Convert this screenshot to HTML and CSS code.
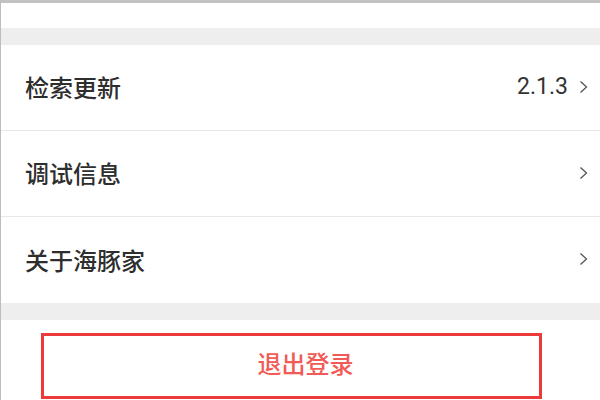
FILE: index.html
```html
<!DOCTYPE html>
<html lang="zh-CN">
<head>
<meta charset="utf-8">
<link rel="stylesheet" href="styles.css">
</head>
<body>
<div class="frame">
  <div class="top-blank"></div>
  <div class="gap"></div>
  <div class="list">
    <div class="row">
      <span class="label">检索更新</span>
      <span class="right"><span class="value">2.1.3</span><svg class="chev" width="9" height="14" viewBox="0 0 9 14"><path d="M1.5 1.5 L7.5 7 L1.5 12.5" fill="none" stroke="#555" stroke-width="1.3"/></svg></span>
    </div>
    <div class="row">
      <span class="label">调试信息</span>
      <span class="right"><svg class="chev" width="9" height="14" viewBox="0 0 9 14"><path d="M1.5 1.5 L7.5 7 L1.5 12.5" fill="none" stroke="#555" stroke-width="1.3"/></svg></span>
    </div>
    <div class="row">
      <span class="label">关于海豚家</span>
      <span class="right"><svg class="chev" width="9" height="14" viewBox="0 0 9 14"><path d="M1.5 1.5 L7.5 7 L1.5 12.5" fill="none" stroke="#555" stroke-width="1.3"/></svg></span>
    </div>
  </div>
  <div class="gap"></div>
  <div class="btn-wrap">
    <div class="btn">退出登录</div>
  </div>
</div>
</body>
</html>
```
FILE: styles.css
```css
html, body {
  margin: 0;
  padding: 0;
  background: #fff;
}
.frame {
  width: 600px;
  height: 400px;
  box-sizing: border-box;
  border-top: 3px solid #c2c2c2;
  border-left: 1px solid #bdbdbd;
  overflow: hidden;
  font-family: "Noto Sans CJK SC", "Noto Sans", sans-serif;
  color: #333;
}
.top-blank {
  height: 25px;
}
.gap {
  height: 17px;
  background: #eeeeee;
}
.row {
  height: 86px;
  box-sizing: border-box;
  border-bottom: 1px solid #e8e8e8;
  display: flex;
  align-items: center;
  justify-content: space-between;
  padding: 0 12px 2px 24px;
}
.row:last-child {
  border-bottom: none;
}
.label {
  font-size: 24px;
  font-weight: 500;
  color: #2e2e2e;
}
.right {
  display: flex;
  align-items: center;
  gap: 11px;
}
.value {
  font-family: Roboto, "Noto Sans", sans-serif;
  font-size: 23px;
  color: #333;
}
.chev {
  display: block;
}
.btn-wrap {
  padding: 13px 58px 0 40px;
}
.btn {
  height: 66px;
  box-sizing: border-box;
  border: 3px solid #ea3a3a;
  display: flex;
  align-items: center;
  justify-content: center;
  padding: 0 0 7px 28px;
  color: #f25a55;
  font-size: 24px;
  font-weight: 500;
}
```
